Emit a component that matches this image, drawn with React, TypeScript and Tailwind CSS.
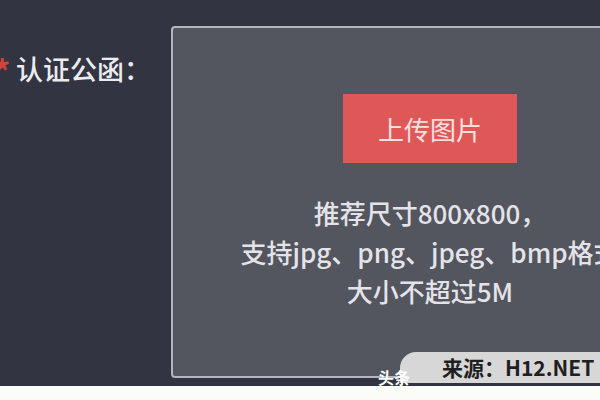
import React from 'react';

const cjk = '"Noto Sans CJK SC", "Noto Sans", sans-serif';

export default function App() {
  return (
    <div
      className="relative w-[600px] h-[400px] overflow-hidden flex flex-col bg-[#fbfbf7]"
      style={{ fontFamily: cjk }}
    >
      <div className="h-[386px] shrink-0 bg-[#323441] flex items-start">
        {/* label column */}
        <div className="w-[171px] shrink-0 pt-[51px] flex items-start">
          <span className="w-[22px] -ml-[6px] mt-[1px] shrink-0 text-[32px] leading-[36px] font-bold text-[#d8403a]">*</span>
          <span className="text-[27px] leading-[36px] font-medium text-[#ebebf0] whitespace-nowrap">认证公函：</span>
        </div>

        {/* upload box */}
        <div className="mt-[26px] w-[518px] h-[352px] shrink-0 rounded-[4px] border-2 border-[#b3b5bf] bg-[#53555f] flex flex-col items-center">
          <button className="mt-[66px] w-[174px] h-[69px] bg-[#df5858] text-[26px] leading-none text-[#fbe0e0] flex items-center justify-center">
            上传图片
          </button>
          <div className="mt-[30px] flex flex-col items-center text-[26px] leading-[39px] font-medium text-[#e3e3e8] whitespace-nowrap">
            <span>推荐尺寸800x800，</span>
            <span>支持jpg、png、jpeg、bmp格式</span>
            <span>大小不超过5M</span>
          </div>
        </div>
      </div>

      {/* watermark overlay */}
      <div className="absolute right-0 top-[352px] w-[200px] h-[31px] bg-[#d7d7d7] rounded-tl-[16px] flex items-center pl-[42px]">
        <span className="text-[21px] leading-none font-bold text-[#1f1f1f] whitespace-nowrap">来源：H12.NET</span>
      </div>
      <span className="absolute left-[378px] top-[367px] text-[16px] leading-[20px] font-bold text-white">头条</span>
    </div>
  );
}
